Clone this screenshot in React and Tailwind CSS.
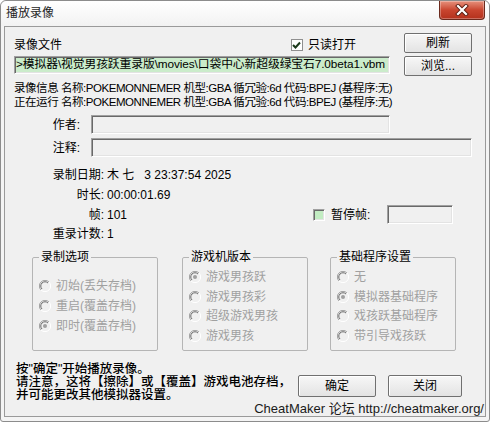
import React from "react";

const font = "font-['Liberation_Sans','Noto_Sans_CJK_SC',sans-serif]";

const Button = ({ children, className = "" }) => (
  <div
    className={`flex items-center justify-center border border-[#707070] rounded-[2px] bg-gradient-to-b from-[#f7f7f7] to-[#e3e3e3] shadow-[inset_1px_1px_0_#ffffff] text-[12px] text-black ${className}`}
  >
    {children}
  </div>
);

const Sunken = ({ className = "", children }) => (
  <div
    className={`border border-t-[#a0a0a0] border-l-[#a0a0a0] border-b-[#ffffff] border-r-[#ffffff] shadow-[inset_1px_1px_0_#696969,inset_-1px_-1px_0_#e3e3e3] ${className}`}
  >
    {children}
  </div>
);

const Radio = ({ checked }) => (
  <svg width="12" height="12" viewBox="0 0 12 12" className="shrink-0">
    <circle cx="6" cy="6" r="5.5" fill="#f0f0f0" />
    <path d="M10 2 A5.5 5.5 0 0 0 2 10" fill="none" stroke="#a0a0a0" strokeWidth="1" />
    <path d="M9 3 A4.2 4.2 0 0 0 3 9" fill="none" stroke="#696969" strokeWidth="1" />
    <path d="M2 10 A5.5 5.5 0 0 0 10 2" fill="none" stroke="#ffffff" strokeWidth="1" />
    {checked && <circle cx="6" cy="6" r="2" fill="#a0a0a0" />}
  </svg>
);

const Group = ({ title, items, checkedIndex, heights, pt, className = "" }) => (
  <fieldset className={`w-[126px] h-[100px] border border-[#b5b5b5] rounded-[2px] px-0 ${className}`}>
    <legend className="ml-[6px] px-[2px] leading-[13px] text-black">{title}</legend>
    <div className="flex flex-col" style={{ paddingTop: pt }}>
      {items.map((t, i) => (
        <div key={t} className="flex items-center pl-[6px]" style={{ height: heights[i] }}>
          <Radio checked={i === checkedIndex} />
          <span className="ml-[5px] text-[#a0a0a0]">{t}</span>
        </div>
      ))}
    </div>
  </fieldset>
);

export default function App() {
  return (
    <div className={`w-[490px] h-[422px] ${font} text-[12px] text-black`}>
      <div className="w-[490px] h-[422px] border border-[#8c8c8c] rounded-t-[6px] rounded-b-[3px] bg-[#f4f4f4] flex flex-col">
        {/* title bar */}
        <div className="h-[25px] flex items-start rounded-t-[6px] bg-gradient-to-b from-[#ffffff] to-[#f2f2f2]">
          <span className="ml-[5px] mt-[5px] text-[12px] leading-[14px] text-[#1e1e1e]">播放录像</span>
          <div className="ml-auto mr-[4px] w-[46px] h-[19px] rounded-b-[4px] border border-t-0 border-[#6b2a1d] bg-gradient-to-b from-[#e6907c] via-[#c9452f] to-[#b3311c] shadow-[inset_0_0_0_1px_rgba(255,255,255,0.3)] flex items-center justify-center">
            <svg width="14" height="12" viewBox="0 0 14 12">
              <path d="M3 2 L11 10 M11 2 L3 10" stroke="#5a1d12" strokeWidth="4" strokeLinecap="square" />
              <path d="M3 2 L11 10 M11 2 L3 10" stroke="#ffffff" strokeWidth="2.2" strokeLinecap="square" />
            </svg>
          </div>
        </div>

        {/* client area */}
        <div className="mx-[3px] h-[391px] border border-[#9a9a9a] bg-[#f0f0f0] pl-[9px] flex flex-col">
          {/* file block */}
          <div className="mt-[6px] flex">
            <div className="w-[376px] flex flex-col">
              <div className="h-[23px] flex items-center">
                <span>录像文件</span>
                <div className="ml-auto mr-[34px] flex items-center">
                  <div className="w-[12px] h-[12px] border border-[#8f8f8f] bg-white flex items-center justify-center">
                    <svg width="9" height="8" viewBox="0 0 9 8">
                      <path d="M1 4 L3.5 6.5 L8 1.5" fill="none" stroke="#1b3a1b" strokeWidth="2" />
                    </svg>
                  </div>
                  <span className="ml-[5px]">只读打开</span>
                </div>
              </div>
              <Sunken className="h-[18px] bg-[#cbeccb] flex items-center overflow-hidden whitespace-nowrap">
                <span className="pl-[1px] text-[11.8px] tracking-[-0.1px]">&gt;模拟器\视觉男孩跃重录版\movies\口袋中心新超级绿宝石7.0beta1.vbm</span>
              </Sunken>
            </div>
            <div className="ml-[14px] flex flex-col gap-[3px]">
              <Button className="w-[68px] h-[20px]">刷新</Button>
              <Button className="w-[68px] h-[20px]">浏览...</Button>
            </div>
          </div>

          {/* info lines */}
          <div className="mt-[5px] flex flex-col leading-[14px] text-[11.5px] tracking-[-0.45px] whitespace-nowrap">
            <span>录像信息 名称:POKEMONNEMER 机型:GBA 循冗验:6d 代码:BPEJ (基程序:无)</span>
            <span>正在运行 名称:POKEMONNEMER 机型:GBA 循冗验:6d 代码:BPEJ (基程序:无)</span>
          </div>

          {/* author / comment */}
          <div className="mt-[6px] flex items-center h-[19px]">
            <span className="w-[66px] text-right">作者:</span>
            <Sunken className="ml-[11px] w-[299px] h-[19px] bg-[#f0f0f0]" />
          </div>
          <div className="mt-[4px] flex items-center h-[19px]">
            <span className="w-[66px] text-right">注释:</span>
            <Sunken className="ml-[11px] w-[381px] h-[19px] bg-[#f0f0f0]" />
          </div>

          {/* stats */}
          <div className="mt-[8px] flex flex-col">
            <div className="h-[20px] flex items-center">
              <span className="w-[90px] text-right">录制日期:</span>
              <span className="ml-[3px]">木 七&nbsp;&nbsp;&nbsp;3 23:37:54 2025</span>
            </div>
            <div className="h-[20px] flex items-center">
              <span className="w-[90px] text-right">时长:</span>
              <span className="ml-[3px]">00:00:01.69</span>
            </div>
            <div className="h-[19px] flex items-center">
              <span className="w-[90px] text-right">帧:</span>
              <span className="ml-[3px] w-[206px]">101</span>
              <Sunken className="w-[12px] h-[12px] bg-[#c2ecc2]" />
              <span className="ml-[6px] w-[56px]">暂停帧:</span>
              <Sunken className="w-[66px] h-[19px] bg-[#f0f0f0]" />
            </div>
            <div className="h-[20px] flex items-center">
              <span className="w-[90px] text-right">重录计数:</span>
              <span className="ml-[3px]">1</span>
            </div>
          </div>

          {/* groups */}
          <div className="mt-[7px] ml-[18px] flex">
            <Group
              title="录制选项"
              items={["初始(丢失存档)", "重启(覆盖存档)", "即时(覆盖存档)"]}
              checkedIndex={2}
              heights={[20, 20, 20]}
              pt={12}
            />
            <Group
              title="游戏机版本"
              items={["游戏男孩跃", "游戏男孩彩", "超级游戏男孩", "游戏男孩"]}
              checkedIndex={0}
              heights={[20, 19, 20, 19]}
              pt={3}
              className="ml-[24px]"
            />
            <Group
              title="基础程序设置"
              items={["无", "模拟器基础程序", "戏孩跃基础程序", "带引导戏孩跃"]}
              checkedIndex={1}
              heights={[20, 19, 20, 19]}
              pt={3}
              className="ml-[22px]"
            />
          </div>

          {/* bottom */}
          <div className="mt-[12px] flex items-start">
            <div className="w-[284px] pl-[2px] flex flex-col leading-[13px] text-[12.5px] font-medium whitespace-nowrap">
              <span>按"确定"开始播放录像。</span>
              <span>请注意，这将【擦除】或【覆盖】游戏电池存档，</span>
              <span>并可能更改其他模拟器设置。</span>
            </div>
            <Button className="mt-[12px] w-[78px] h-[22px]">确定</Button>
            <Button className="mt-[12px] ml-[12px] w-[74px] h-[22px]">关闭</Button>
          </div>
          <div className="h-[14px] flex justify-end items-center pr-[1px] text-[13px] leading-[14px] text-[#1a1a1a] whitespace-nowrap">
            CheatMaker 论坛 http://cheatmaker.org/
          </div>
        </div>
      </div>
    </div>
  );
}
